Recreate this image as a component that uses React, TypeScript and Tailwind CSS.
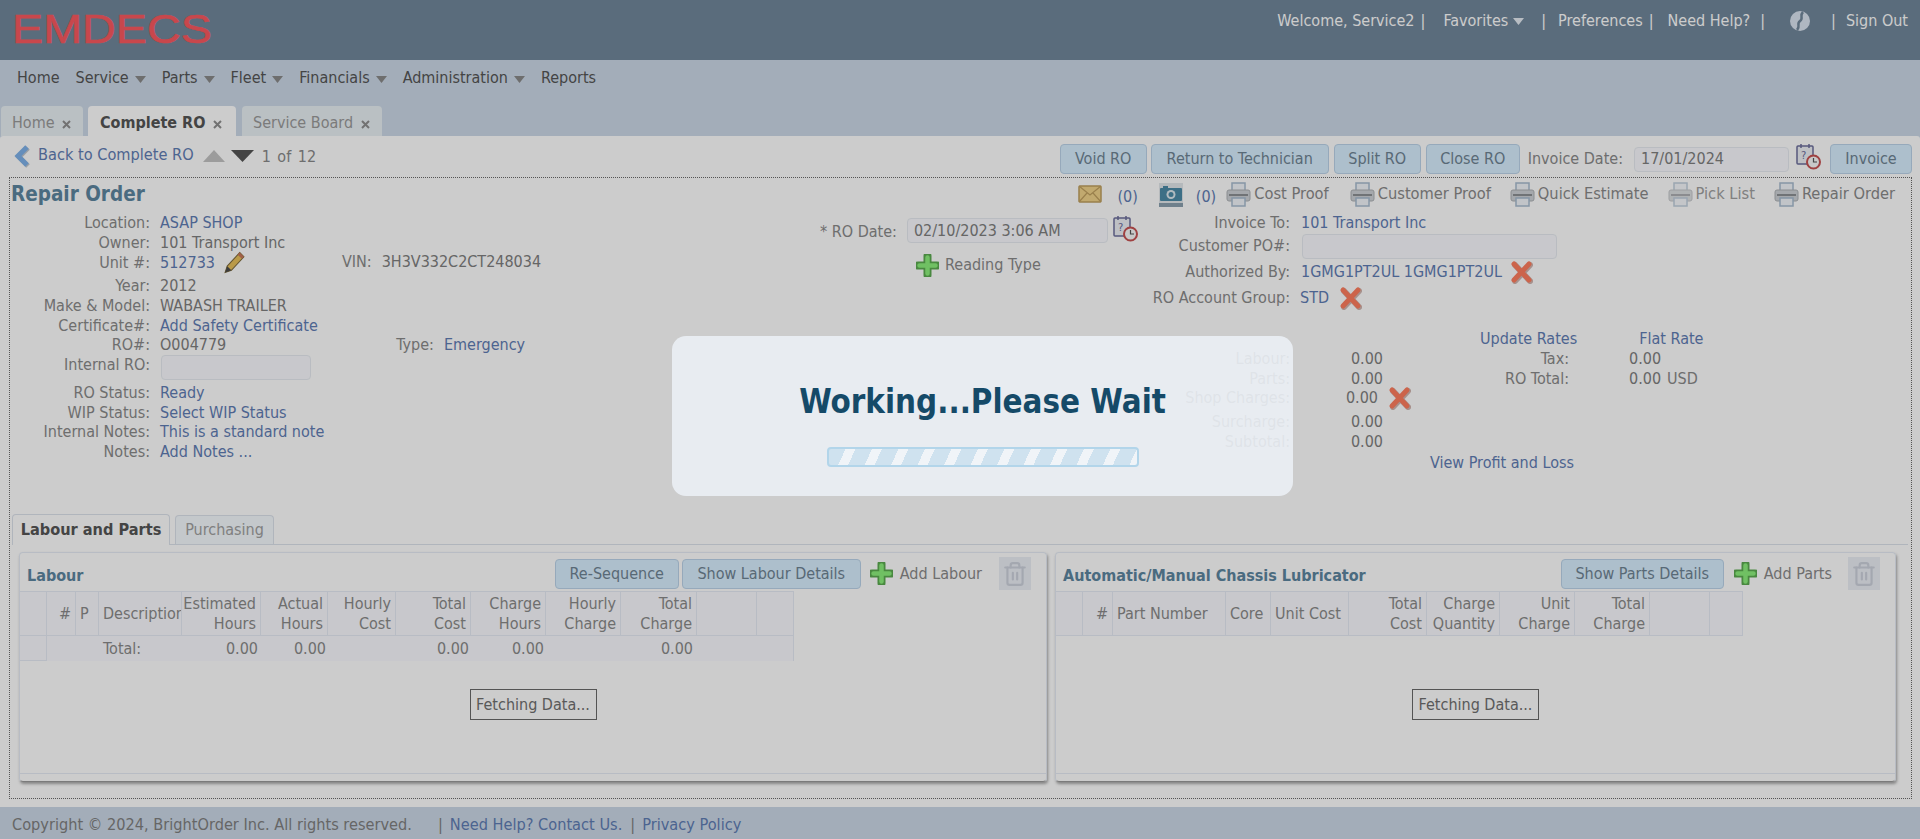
import { Trash2 } from 'lucide-react'

const linkText = 'text-[#5f7db4]'
const labelText = 'text-[#8a8a8a]'
const valueText = 'text-[#808080]'

function Caret({ className = '', light = false }: { className?: string; light?: boolean }) {
    return (
        <svg width="11" height="7" viewBox="0 0 11 7" className={className}>
            <polygon points="0,0 11,0 5.5,7" fill={light ? '#e6edf4' : '#8a8a8a'} />
        </svg>
    )
}

function CloseMark() {
    return (
        <svg width="11" height="11" viewBox="0 0 11 11" className="mt-[8px]">
            <path d="M2 2 L9 9 M9 2 L2 9" stroke="#8f8f8f" strokeWidth="2" />
        </svg>
    )
}

function Printer({ dim = false }: { dim?: boolean }) {
    return (
        <svg width="25" height="25" viewBox="0 0 25 25" className={dim ? 'opacity-70' : ''}>
            <rect x="6" y="1" width="13" height="9" fill="#f2f6fb" stroke="#a8bcd0" strokeWidth="1.5" />
            <rect x="1" y="8" width="23" height="11" rx="2" fill="#cfd3d7" stroke="#aeb2b6" />
            <rect x="3" y="12" width="19" height="2" fill="#8c9094" />
            <rect x="6" y="16" width="13" height="8" fill="#f2f6fb" stroke="#a8bcd0" strokeWidth="1.5" />
        </svg>
    )
}

function RedX({ className = '' }: { className?: string }) {
    return (
        <svg width="23" height="24" viewBox="0 0 23 24" className={className}>
            <path d="M4 4 L19 20 M19 4 L4 20" stroke="#8f4a3c" strokeWidth="6" strokeLinecap="round" opacity="0.4" transform="translate(1 1)" />
            <path d="M4 4 L19 20 M19 4 L4 20" stroke="#ff7d5e" strokeWidth="5" strokeLinecap="round" />
        </svg>
    )
}

function GreenPlus() {
    return (
        <svg width="23" height="23" viewBox="0 0 23 23">
            <path d="M11.5 2 V21 M2 11.5 H21" stroke="#5cab50" strokeWidth="8" strokeLinecap="round" />
            <path d="M11.5 3.5 V19.5 M3.5 11.5 H19.5" stroke="#8cf07c" strokeWidth="4.5" strokeLinecap="round" />
        </svg>
    )
}

function CalendarClock() {
    return (
        <svg width="25" height="27" viewBox="0 0 25 27">
            <rect x="1" y="3" width="16" height="18" rx="1" fill="#eef0f6" stroke="#6d6f9c" strokeWidth="1.5" />
            <path d="M5 1 V5 M13 1 V5" stroke="#6d6f9c" strokeWidth="1.5" />
            <text x="5" y="16" fontSize="11" fontFamily="DejaVu Sans Condensed" fill="#6d6f9c">?</text>
            <circle cx="17.5" cy="19" r="6.5" fill="#fafafa" stroke="#c75252" strokeWidth="2" />
            <path d="M17.5 15 V19 H21" stroke="#555" strokeWidth="1.2" fill="none" />
        </svg>
    )
}

function Envelope() {
    return (
        <svg width="24" height="19" viewBox="0 0 24 19">
            <rect x="1" y="1" width="22" height="16" rx="1" fill="#f2d48b" stroke="#c0a060" strokeWidth="1.5" />
            <path d="M1 1 L12 10 L23 1 M1 17 L9 8 M23 17 L15 8" stroke="#c0a060" strokeWidth="1.2" fill="none" />
        </svg>
    )
}

function Camera() {
    return (
        <svg width="24" height="24" viewBox="0 0 24 24">
            <rect x="0" y="0" width="24" height="24" fill="#e3e8ec" />
            <rect x="0" y="20" width="24" height="4" fill="#8ba0b0" />
            <rect x="1" y="5" width="22" height="13" rx="1" fill="#4d8ba8" />
            <rect x="4" y="3" width="5" height="3" fill="#4d8ba8" />
            <circle cx="12" cy="11.5" r="4.5" fill="#dfeaf0" />
            <circle cx="12" cy="11.5" r="2.5" fill="#4d8ba8" />
        </svg>
    )
}

function Pencil() {
    return (
        <svg width="24" height="26" viewBox="0 0 23 24">
            <path d="M3 21 L5 15 L17 2 L21 6 L9 19 Z" fill="#e9c15c" stroke="#7d6a3c" strokeWidth="1" />
            <path d="M17 2 L21 6 L19 8 L15 4 Z" fill="#c9785a" />
            <path d="M3 21 L5 15 L9 19 Z" fill="#4b4b4b" />
        </svg>
    )
}

function BackArrow() {
    return (
        <svg width="17" height="24" viewBox="0 0 17 24">
            <path d="M14 3 L5 12 L14 21" stroke="#4a5f76" strokeWidth="5" fill="none" opacity="0.35" transform="translate(1 1)" />
            <path d="M14 3 L5 12 L14 21" stroke="#7fb2ea" strokeWidth="5" fill="none" />
        </svg>
    )
}

function Globe() {
    return (
        <svg width="22" height="22" viewBox="0 0 22 22">
            <circle cx="11" cy="11" r="10" fill="#dbe5f2" />
            <path d="M14 2 C10 6 15 8 11 11 C7 14 12 16 8 20" stroke="#71879b" strokeWidth="2.5" fill="none" />
        </svg>
    )
}

function ActionButton({ label, className }: { label: string; className: string }) {
    return (
        <div className={`flex h-[30px] shrink-0 items-center justify-center rounded-[4px] border border-[#bcd4ea] bg-[#d9efff] text-[16px] text-[#6f8494] ${className}`}>
            {label}
        </div>
    )
}

function PrintLink({ label, className, dim }: { label: string; className: string; dim?: boolean }) {
    return (
        <div className={`flex items-center gap-[3px] text-[16.3px] ${className}`}>
            <Printer dim={dim} />
            <span className={dim ? 'text-[#a0a0a0]' : labelText}>{label}</span>
        </div>
    )
}

const topRows = [
    { label: 'Location:', value: 'ASAP SHOP', link: true, cls: 'h-5' },
    { label: 'Owner:', value: '101 Transport Inc', cls: 'h-5' },
    { label: 'Unit #:', value: '512733', link: true, cls: 'h-[19px]', pencil: true, extra: 'vin' },
    { label: 'Year:', value: '2012', cls: 'mt-[4px] h-5' },
    { label: 'Make & Model:', value: 'WABASH TRAILER', cls: 'h-5' },
    { label: 'Certificate#:', value: 'Add Safety Certificate', link: true, cls: 'h-[19px]' },
    { label: 'RO#:', value: 'O004779', cls: 'h-5', extra: 'type' },
]

const bottomRows = [
    { label: 'RO Status:', value: 'Ready', cls: 'mt-[2px] h-5' },
    { label: 'WIP Status:', value: 'Select WIP Status', cls: 'h-[19px]' },
    { label: 'Internal Notes:', value: 'This is a standard note', cls: 'h-5' },
    { label: 'Notes:', value: 'Add Notes ...', cls: 'h-[19px]' },
]

const labourColumns = [
    { w: 'w-[27px]', h: [] },
    { w: 'w-[29px]', h: ['#'], right: true },
    { w: 'w-[23px]', h: ['P'] },
    { w: 'w-[83px]', h: ['Description'] },
    { w: 'w-[79px]', h: ['Estimated', 'Hours'], right: true },
    { w: 'w-[67px]', h: ['Actual', 'Hours'], right: true },
    { w: 'w-[68px]', h: ['Hourly', 'Cost'], right: true },
    { w: 'w-[75px]', h: ['Total', 'Cost'], right: true },
    { w: 'w-[75px]', h: ['Charge', 'Hours'], right: true },
    { w: 'w-[75px]', h: ['Hourly', 'Charge'], right: true },
    { w: 'w-[76px]', h: ['Total', 'Charge'], right: true },
    { w: 'w-[60px]', h: [] },
    { w: 'w-[37px]', h: [] },
]

const partsColumns = [
    { w: 'w-[27px]', h: [] },
    { w: 'w-[30px]', h: ['#'], right: true },
    { w: 'w-[113px]', h: ['Part Number'] },
    { w: 'w-[45px]', h: ['Core'] },
    { w: 'w-[78px]', h: ['Unit Cost'] },
    { w: 'w-[78px]', h: ['Total', 'Cost'], right: true },
    { w: 'w-[73px]', h: ['Charge', 'Quantity'], right: true },
    { w: 'w-[75px]', h: ['Unit', 'Charge'], right: true },
    { w: 'w-[75px]', h: ['Total', 'Charge'], right: true },
    { w: 'w-[60px]', h: [] },
    { w: 'w-[33px]', h: [] },
]

type Column = { w: string; h: string[]; right?: boolean }

function GridHeader({ columns }: { columns: Column[] }) {
    return (
        <div className="flex h-[45px] w-fit border-y border-[#e6ecf6] bg-[#fafbff]">
            {columns.map((col, i) => (
                <div
                    key={i}
                    className={`flex shrink-0 flex-col justify-center overflow-hidden border-r border-[#e6ecf6] whitespace-nowrap px-[4px] text-[16px] leading-[20px] ${labelText} ${col.w} ${col.right ? 'items-end' : 'items-start'}`}
                >
                    {col.h.map((line) => (
                        <span key={line}>{line}</span>
                    ))}
                </div>
            ))}
        </div>
    )
}

function FetchingBox() {
    return (
        <div className="flex h-[31px] w-[127px] items-center justify-center border border-[#6a6a6a] text-[16px] text-[#707070]">
            Fetching Data...
        </div>
    )
}

function LabourTotals() {
    return (
        <div className={`absolute top-0 left-0 flex h-[25px] w-[774px] items-center border-r border-[#e6ecf6] bg-[#fafbff] text-[16px] ${labelText}`}>
            <div className="h-full w-[27px] border-r border-b border-[#e6ecf6]" />
            <div className="ml-[56px] w-[79px]">Total:</div>
            <div className="w-[76px] text-right">0.00</div>
            <div className="w-[68px] text-right">0.00</div>
            <div className="w-[143px] text-right">0.00</div>
            <div className="w-[75px] text-right">0.00</div>
            <div className="w-[149px] text-right">0.00</div>
        </div>
    )
}

function Panel({ className, title, columns, actions, totals }: { className: string; title: string; columns: Column[]; actions: React.ReactNode; totals?: boolean }) {
    return (
        <div className={`flex h-[230px] flex-col rounded-[4px] border border-[#e6ecf6] border-b-[#9a9a9a] shadow-[1px_2px_3px_rgba(0,0,0,0.35)] ${className}`}>
            <div className="flex h-[38px] items-center justify-between pr-[15px] pl-[7px]">
                <div className="mt-[7px] text-[16px] font-bold text-[#5d86a0]">{title}</div>
                <div className="mt-[3px] flex items-center">{actions}</div>
            </div>
            <GridHeader columns={columns} />
            <div className="relative flex h-[137px] items-center justify-center">
                {totals && <LabourTotals />}
                <FetchingBox />
            </div>
            <div className="grow border-t border-[#e6ecf6]" />
        </div>
    )
}

function TrashBox() {
    return (
        <div className="flex h-[33px] w-[32px] items-center justify-center bg-[#ebeff6]">
            <Trash2 size={26} strokeWidth={2} color="#cdd2dd" />
        </div>
    )
}

export default function App() {
    return (
        <div className="relative h-[839px] w-[1920px] overflow-hidden bg-[#ccd9e8] font-['DejaVu_Sans_Condensed','DejaVu_Sans',sans-serif] text-[16px]">
            <header className="flex h-[60px] justify-between bg-[#71879b] pl-[12px]">
                <svg width="200" height="32" viewBox="0 0 200 32" className="mt-[13px] overflow-visible">
                    <text x="0" y="30" fontSize="41" fontFamily="Liberation Sans" textLength="200" lengthAdjust="spacingAndGlyphs" fill="#fa5960" stroke="#fa5960" strokeWidth="0.6">
                        EMDECS
                    </text>
                </svg>
                <div className="flex h-[42px] items-center pr-[12px] text-white">
                    <span>Welcome, Service2</span>
                    <span className="ml-[6px]">|</span>
                    <span className="ml-[18px]">Favorites</span>
                    <Caret light className="ml-[5px]" />
                    <span className="ml-[17px]">|</span>
                    <span className="ml-[12px]">Preferences</span>
                    <span className="ml-[6px]">|</span>
                    <span className="ml-[14px]">Need Help?</span>
                    <span className="ml-[10px]">|</span>
                    <span className="ml-[24px]"><Globe /></span>
                    <span className="ml-[20px]">|</span>
                    <span className="ml-[10px]">Sign Out</span>
                </div>
            </header>

            <nav className="flex h-[46px] items-start pt-[6px] pl-[17px] text-[#555]">
                {['Home', 'Service', 'Parts', 'Fleet', 'Financials', 'Administration', 'Reports'].map((item) => (
                    <div key={item} className="mr-[16px] flex items-center">
                        <span>{item}</span>
                        {item !== 'Home' && item !== 'Reports' && <Caret className="mt-[2px] ml-[6px]" />}
                    </div>
                ))}
            </nav>

            <div className="flex h-[30px] items-end pl-[1px]">
                <div className="mr-[5px] flex h-[30px] w-[82px] gap-[6px] rounded-t-[4px] bg-[#e9f0f4] pt-[5px] pl-[11px] text-[#9a9a9a]">
                    Home <CloseMark />
                </div>
                <div className="mr-[6px] flex h-[30px] w-[148px] gap-[7px] rounded-t-[4px] bg-white pt-[5px] pl-[12px] font-bold text-[#555]">
                    Complete RO <CloseMark />
                </div>
                <div className="flex h-[30px] w-[140px] gap-[7px] rounded-t-[4px] bg-[#e9f0f4] pt-[5px] pl-[11px] text-[#9a9a9a]">
                    Service Board <CloseMark />
                </div>
            </div>

            <main className="flex h-[671px] flex-col rounded-t-[3px] bg-white pt-[8px] pr-[8px] pl-[9px]">
                <div className="flex h-[30px] items-center">
                    <div className="-mt-[7px] ml-[4px] flex items-center">
                        <BackArrow />
                        <span className={`ml-[8px] text-[16.2px] ${linkText}`}>Back to Complete RO</span>
                        <svg width="52" height="14" viewBox="0 0 52 14" className="ml-[9px]">
                            <polygon points="0,13 11,1 22,13" fill="#c4c4c4" />
                            <polygon points="28,1 51,1 39.5,13" fill="#555" />
                        </svg>
                        <span className={`mt-[3px] ml-[7px] [word-spacing:2px] ${labelText}`}>1 of 12</span>
                    </div>
                    <div className="ml-auto flex items-center gap-[4px]">
                        <ActionButton label="Void RO" className="w-[87px]" />
                        <ActionButton label="Return to Technician" className="w-[178px]" />
                        <ActionButton label="Split RO" className="ml-[1px] w-[87px]" />
                        <ActionButton label="Close RO" className="ml-[1px] w-[94px]" />
                        <span className={`ml-[4px] ${labelText}`}>Invoice Date:</span>
                        <div className="ml-[7px] flex h-[25px] w-[155px] items-center rounded-[4px] border border-[#e8ecf2] bg-[#fafbff] pl-[6px] text-[#808080]">17/01/2024</div>
                        <span className="ml-[3px] -translate-y-[3px]"><CalendarClock /></span>
                        <ActionButton label="Invoice" className="ml-[5px] w-[82px]" />
                    </div>
                </div>

                <div className="mt-[3px] flex h-[622px] flex-col border border-dotted border-[#6a6a6a] pl-[2px]">
                    <div className="flex h-[35px] items-center pr-[16px]">
                        <h1 className="-mt-[2px] -ml-[1px] text-[20.5px] leading-none font-bold text-[#5d86a0]">Repair Order</h1>
                        <div className="ml-auto flex -translate-y-[1px] items-center">
                            <Envelope />
                            <span className={`mt-[4px] ml-[15px] ${linkText}`}>(0)</span>
                            <span className="ml-[21px]"><Camera /></span>
                            <span className={`mt-[4px] ml-[13px] ${linkText}`}>(0)</span>
                            <PrintLink label="Cost Proof" className="ml-[10px]" />
                            <PrintLink label="Customer Proof" className="ml-[21px]" />
                            <PrintLink label="Quick Estimate" className="ml-[19px]" />
                            <PrintLink label="Pick List" className="ml-[19px]" dim />
                            <PrintLink label="Repair Order" className="ml-[19px]" />
                        </div>
                    </div>

                    <div className="flex h-[301px]">
                        <div className="w-[808px] shrink-0">
                            {topRows.map((row) => (
                                <div key={row.label} className={`flex items-center ${row.cls}`}>
                                    <span className={`w-[138px] text-right ${labelText}`}>{row.label}</span>
                                    <span className={`ml-[10px] ${row.link ? linkText : valueText}`}>{row.value}</span>
                                    {row.pencil && <span className="ml-[7px]"><Pencil /></span>}
                                    {row.extra === 'vin' && (
                                        <>
                                            <span className={`ml-[96px] -translate-y-[1px] ${labelText}`}>VIN:</span>
                                            <span className={`ml-[10px] -translate-y-[1px] ${valueText}`}>3H3V332C2CT248034</span>
                                        </>
                                    )}
                                    {row.extra === 'type' && (
                                        <>
                                            <span className={`ml-[170px] ${labelText}`}>Type:</span>
                                            <span className={`ml-[10px] ${linkText}`}>Emergency</span>
                                        </>
                                    )}
                                </div>
                            ))}
                            <div className="flex h-[26px] items-start">
                                <span className={`w-[138px] text-right leading-[19px] ${labelText}`}>Internal RO:</span>
                                <div className="ml-[11px] h-[25px] w-[150px] rounded-[4px] border border-[#e8ecf2] bg-[#fafbff]" />
                            </div>
                            {bottomRows.map((row) => (
                                <div key={row.label} className={`flex items-center ${row.cls}`}>
                                    <span className={`w-[138px] text-right ${labelText}`}>{row.label}</span>
                                    <span className={`ml-[10px] ${linkText}`}>{row.value}</span>
                                </div>
                            ))}
                        </div>

                        <div className="flex grow flex-col">
                            <div className="flex h-[116px]">
                                <div className="w-[330px] shrink-0 pt-[5px]">
                                    <div className="flex items-center">
                                        <span className={labelText}>* RO Date:</span>
                                        <div className="ml-[10px] flex h-[25px] w-[201px] -translate-y-[1px] items-center rounded-[4px] border border-[#e8ecf2] bg-[#fafbff] pl-[6px] text-[#808080]">02/10/2023 3:06 AM</div>
                                        <span className="ml-[5px] -translate-y-[3px]"><CalendarClock /></span>
                                    </div>
                                    <div className="mt-[8px] ml-[96px] flex items-center gap-[6px]">
                                        <GreenPlus />
                                        <span className={labelText}>Reading Type</span>
                                    </div>
                                </div>
                                <div>
                                    <div className="flex h-[20px] items-center">
                                        <span className={`w-[140px] text-right ${labelText}`}>Invoice To:</span>
                                        <span className={`ml-[11px] ${linkText}`}>101 Transport Inc</span>
                                    </div>
                                    <div className="flex h-[26px] items-center">
                                        <span className={`w-[140px] text-right ${labelText}`}>Customer PO#:</span>
                                        <div className="ml-[12px] h-[25px] w-[255px] rounded-[4px] border border-[#e8ecf2] bg-[#fafbff]" />
                                    </div>
                                    <div className="mt-[1px] flex h-[24px] items-center">
                                        <span className={`w-[140px] text-right ${labelText}`}>Authorized By:</span>
                                        <span className={`ml-[11px] ${linkText}`}>1GMG1PT2UL 1GMG1PT2UL</span>
                                        <RedX className="ml-[8px]" />
                                    </div>
                                    <div className="mt-[2px] flex h-[24px] items-center">
                                        <span className={`w-[140px] text-right ${labelText}`}>RO Account Group:</span>
                                        <span className={`ml-[10px] ${linkText}`}>STD</span>
                                        <RedX className="ml-[10px]" />
                                    </div>
                                </div>
                            </div>

                            <div className="flex">
                                <div className="w-[563px] shrink-0 pt-[20px]">
                                    {[
                                        { label: 'Labour:', cls: 'h-5' },
                                        { label: 'Parts:', cls: 'h-[19px]' },
                                        { label: 'Shop Charges:', cls: 'h-5', x: true },
                                        { label: 'Surcharge:', cls: 'mt-[4px] h-5' },
                                        { label: 'Subtotal:', cls: 'h-[19px]' },
                                    ].map((row) => (
                                        <div key={row.label} className={`flex items-center ${row.cls}`}>
                                            <span className={`w-[470px] shrink-0 text-right ${labelText}`}>{row.label}</span>
                                            <span className={`shrink-0 text-right ${valueText} ${row.x ? 'w-[88px]' : 'w-[93px]'}`}>0.00</span>
                                            {row.x && <RedX className="ml-[10px] shrink-0" />}
                                        </div>
                                    ))}
                                </div>
                                <div className="ml-[47px]">
                                    <div className={`flex h-5 items-center ${linkText}`}>
                                        <span className="ml-[50px]">Update Rates</span>
                                        <span className="ml-[62px]">Flat Rate</span>
                                    </div>
                                    <div className="flex h-5 items-center">
                                        <span className={`w-[139px] text-right ${labelText}`}>Tax:</span>
                                        <span className={`ml-[60px] ${valueText}`}>0.00</span>
                                    </div>
                                    <div className="flex h-[19px] items-center">
                                        <span className={`w-[139px] text-right ${labelText}`}>RO Total:</span>
                                        <span className={`ml-[60px] ${valueText}`}>0.00</span>
                                        <span className={`ml-[6px] ${labelText}`}>USD</span>
                                    </div>
                                    <div className={`mt-[63px] h-5 ${linkText}`}>View Profit and Loss</div>
                                </div>
                            </div>
                        </div>
                    </div>

                    <div className="mr-[3px] flex h-[31px] items-end gap-[5px] border-b border-[#dde3ec] pl-0">
                        <div className="flex h-[31px] w-[158px] translate-y-px items-center justify-center rounded-t-[4px] border border-b-0 border-[#dde3ec] bg-white text-[16.2px] font-bold text-[#555]">
                            Labour and Parts
                        </div>
                        <div className="flex h-[29px] w-[99px] items-center justify-center rounded-t-[4px] border border-b-0 border-[#dde3ec] bg-[#f5fafe] text-[#a0a0a0]">
                            Purchasing
                        </div>
                    </div>

                    <div className="mt-[7px] flex gap-[8px] pl-[7px]">
                        <Panel
                            className="w-[1028px]"
                            title="Labour"
                            columns={labourColumns}
                            totals
                            actions={
                                <>
                                    <ActionButton label="Re-Sequence" className="w-[124px]" />
                                    <ActionButton label="Show Labour Details" className="ml-[3px] w-[179px]" />
                                    <span className="ml-[9px]"><GreenPlus /></span>
                                    <span className={`ml-[7px] ${labelText}`}>Add Labour</span>
                                    <span className="ml-[17px]"><TrashBox /></span>
                                </>
                            }
                        />
                        <Panel
                            className="w-[841px]"
                            title="Automatic/Manual Chassis Lubricator"
                            columns={partsColumns}
                            actions={
                                <>
                                    <ActionButton label="Show Parts Details" className="w-[163px]" />
                                    <span className="ml-[10px]"><GreenPlus /></span>
                                    <span className={`ml-[7px] ${labelText}`}>Add Parts</span>
                                    <span className="ml-[16px]"><TrashBox /></span>
                                </>
                            }
                        />
                    </div>
                </div>
            </main>

            <footer className="flex h-[32px] items-center pt-[4px] pl-[12px] text-[16.2px] text-[#808080]">
                <span>Copyright © 2024, BrightOrder Inc. All rights reserved.</span>
                <span className="ml-[26px]">|</span>
                <span className={`ml-[7px] ${linkText}`}>Need Help? Contact Us.</span>
                <span className="ml-[8px]">|</span>
                <span className={`ml-[7px] ${linkText}`}>Privacy Policy</span>
            </footer>

            <div className="absolute inset-0 bg-black/20" />
            <div className="absolute top-[336px] left-[672px] flex h-[160px] w-[621px] flex-col items-center rounded-[14px] bg-[#ebeff5]/90">
                <div className="mt-[45px] text-[32.8px] leading-[42px] font-bold text-[#154a68]">Working...Please Wait</div>
                <div className="mt-[24px] h-[20px] w-[312px] rounded-[4px] border-2 border-[#b2d5ea] bg-[repeating-linear-gradient(115deg,#cfe2ef_0px,#cfe2ef_15px,#f0f4f8_15px,#f0f4f8_24px)]" />
            </div>
        </div>
    )
}
